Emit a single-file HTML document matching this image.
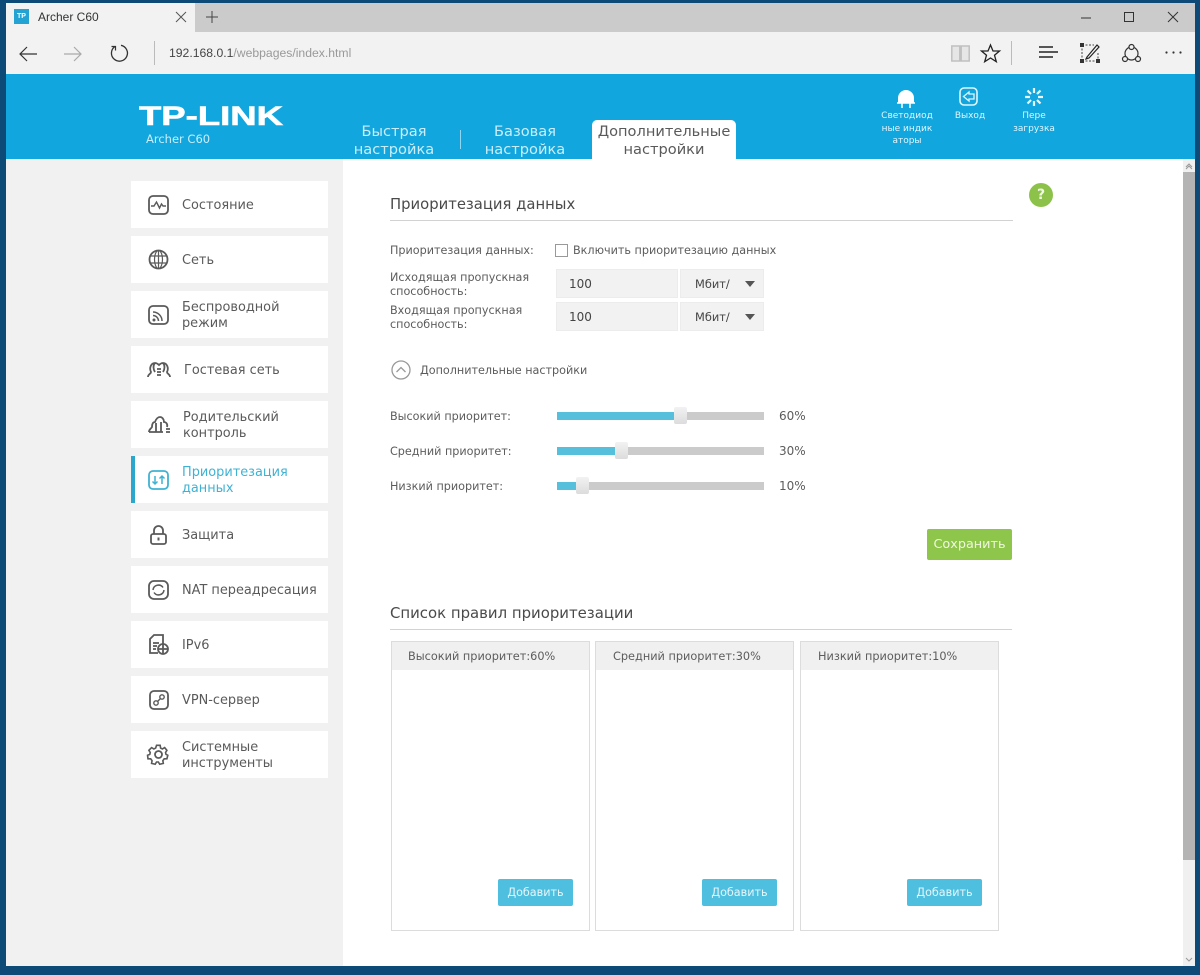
<!DOCTYPE html>
<html lang="ru">
<head>
<meta charset="utf-8">
<title>Archer C60</title>
<style>
html,body{margin:0;padding:0}
body{width:1200px;height:975px;overflow:hidden;position:relative;background:#0d4a78;font-family:"DejaVu Sans","Liberation Sans",sans-serif;color:#555}
.a{position:absolute}
.t{position:absolute;white-space:nowrap;font-size:11.2px;line-height:14px;color:#5c5c5c}
.n{font-size:12px}
.b{position:absolute;background:#fff;left:131px;width:197px;height:47px}
.m{position:absolute;left:182px;white-space:nowrap;font-size:12.9px;line-height:16px;color:#5a5a5a;margin-top:1px}
svg{position:absolute;overflow:visible}
.ic{fill:none;stroke:#5a5a5a;stroke-width:1.8}
.sl{position:absolute;left:557px;width:207px;height:8px;background:#cbcbcb}
.fl{position:absolute;left:557px;height:8px;background:#56bfdc}
.th{position:absolute;width:13px;height:17px;background:linear-gradient(#f2f2f2,#dcdcdc);border-radius:2px}
.inp{position:absolute;background:#f2f2f2;height:29px;border:1px solid #ececec;box-sizing:border-box}
.col{position:absolute;top:641px;width:199px;height:290px;border:1px solid #dcdcdc;box-sizing:border-box;background:#fff}
.col div.h{height:28px;background:#f0f0f0;font-size:11.3px;line-height:29px;color:#5c5c5c;padding-left:16px;white-space:nowrap}
.add{position:absolute;width:75px;height:27px;top:879px;background:#4fbfdf;border-radius:2px;color:#e4f6fb;font-size:11.2px;line-height:27px;text-align:center}
.hd{position:absolute;color:#e0f5fc;font-size:9px;line-height:12.5px;text-align:center;font-weight:400;white-space:nowrap}
.nav{position:absolute;text-align:center;font-size:14.6px;line-height:18px;color:#c8eefa;white-space:nowrap}
</style>
</head>
<body>
<!-- window -->
<div class="a" style="left:6px;top:3px;width:1189px;height:29px;background:#cbcbcb"></div>
<div class="a" style="left:6px;top:3px;width:189px;height:29px;background:#f2f2f2"></div>
<div class="a" style="left:6px;top:32px;width:1189px;height:42px;background:#f2f2f2"></div>
<div class="a" style="left:6px;top:74px;width:1189px;height:85px;background:#12a6de"></div>
<div class="a" style="left:6px;top:159px;width:337px;height:807px;background:#f1f1f1"></div>
<div class="a" style="left:343px;top:159px;width:840px;height:807px;background:#fff"></div>
<div class="a" style="left:1183px;top:159px;width:12px;height:807px;background:#f0f0f0"></div>
<div class="a" style="left:1183px;top:172px;width:12px;height:688px;background:#b4b4b4"></div>
<svg style="left:1183px;top:159px" width="12" height="12"><path d="M3 8l3-3 3 3M3 10l3-3 3 3" fill="none" stroke="#999" stroke-width="1"/></svg>
<svg style="left:1183px;top:954px" width="12" height="12"><path d="M3 4l3 3 3-3" fill="none" stroke="#999" stroke-width="1"/></svg>

<!-- tab -->
<div class="a" style="left:14px;top:9px;width:15px;height:15px;background:#23a3d3;color:#fff;font:bold 7px/15px 'Liberation Sans',sans-serif;text-align:center">TP</div>
<div class="t" style="left:38px;top:10px;font-family:'Liberation Sans',sans-serif;font-size:12px;color:#333">Archer C60</div>
<svg style="left:176px;top:12px" width="10" height="10"><path d="M0 0l10 10M10 0L0 10" stroke="#555" stroke-width="1" fill="none"/></svg>
<svg style="left:206px;top:11px" width="12" height="12"><path d="M6 0v12M0 6h12" stroke="#444" stroke-width="1" fill="none"/></svg>
<!-- window ctl -->
<svg style="left:1081px;top:17px" width="10" height="2"><path d="M0 1h10" stroke="#333" stroke-width="1"/></svg>
<svg style="left:1124px;top:12px" width="10" height="10"><rect x=".5" y=".5" width="9" height="9" fill="none" stroke="#333"/></svg>
<svg style="left:1168px;top:12px" width="10" height="10"><path d="M0 0l10 10M10 0L0 10" stroke="#333" stroke-width="1" fill="none"/></svg>
<!-- toolbar -->
<svg style="left:19px;top:45px" width="18" height="18"><path d="M18 9H1M8 2L1 9l7 7" fill="none" stroke="#333" stroke-width="1.2"/></svg>
<svg style="left:64px;top:45px" width="18" height="18"><path d="M0 9h17M10 2l7 7-7 7" fill="none" stroke="#aaa" stroke-width="1.2"/></svg>
<svg style="left:110px;top:44px" width="18" height="18"><path d="M5 2.500A8 8 0 1 0 11 1.300" fill="none" stroke="#333" stroke-width="1.300"/><path d="M1.500 2.500H5.500V6.500" fill="none" stroke="#333" stroke-width="1.200"/></svg>
<div class="a" style="left:154px;top:41px;width:1px;height:24px;background:#bbb"></div>
<div class="t" style="left:169px;top:46px;font-family:'Liberation Sans',sans-serif;font-size:12.2px;color:#444">192.168.0.1<span style="color:#999">/webpages/index.html</span></div>
<svg style="left:951px;top:45px" width="19" height="17"><path d="M.8 1h8v15h-8zM10.200 1h8v15h-8z" fill="#e6e6e6" stroke="#c0c0c0" stroke-width="1.500"/></svg>
<svg style="left:981px;top:44px" width="19" height="19"><path d="M9.500 1l2.500 6h6.500l-5 4.200 1.800 6.500-5.800-3.700-5.800 3.700 1.800-6.500-5-4.200H7z" fill="none" stroke="#222" stroke-width="1.3"/></svg>
<div class="a" style="left:1011px;top:41px;width:1px;height:24px;background:#bbb"></div>
<svg style="left:1039px;top:46px" width="19" height="13"><path d="M0 1h14M0 6h19M0 11h14" stroke="#222" stroke-width="1.4" fill="none"/></svg>
<svg style="left:1080px;top:43px" width="20" height="20"><path d="M2 2h12M2 18h16M2 2v16M18 10v8" stroke="#444" stroke-dasharray="2 1.500" fill="none"/><path d="M7 14L17 2l2 2L9 15l-3 1z" fill="none" stroke="#222" stroke-width="1.200"/><rect x="0" y="0" width="4" height="4" fill="#333"/><rect x="0" y="16" width="4" height="4" fill="#333"/><rect x="16" y="16" width="4" height="4" fill="#333"/></svg>
<svg style="left:1122px;top:44px" width="19" height="19"><circle cx="9.500" cy="9.500" r="6.500" fill="none" stroke="#333" stroke-width="1.200"/><circle cx="9.500" cy="3" r="2.500" fill="#f2f2f2" stroke="#333" stroke-width="1.200"/><circle cx="3" cy="15" r="2.500" fill="#f2f2f2" stroke="#333" stroke-width="1.200"/><circle cx="16" cy="15" r="2.500" fill="#f2f2f2" stroke="#333" stroke-width="1.200"/></svg>
<svg style="left:1165px;top:51px" width="17" height="3"><circle cx="1.500" cy="1.500" r="1.100" fill="#333"/><circle cx="8.500" cy="1.500" r="1.100" fill="#333"/><circle cx="15.500" cy="1.500" r="1.100" fill="#333"/></svg>

<!-- header -->
<svg style="left:139px;top:104px" width="146" height="24"><text x="0" y="21" font-family="Liberation Sans" font-weight="700" font-size="27" fill="#fff" stroke="#fff" stroke-width=".6" textLength="144" lengthAdjust="spacingAndGlyphs">TP-LINK</text></svg>
<div class="t" style="left:146px;top:132px;color:#c8eefa;font-size:11.500px">Archer C60</div>
<div class="nav" style="left:344px;top:123px;width:100px">Быстрая<br>настройка</div>
<div class="a" style="left:460px;top:130px;width:1px;height:19px;background:#8fd6f0"></div>
<div class="nav" style="left:475px;top:123px;width:100px">Базовая<br>настройка</div>
<div class="a" style="left:592px;top:120px;width:144px;height:39px;background:#fff;border-radius:5px 5px 0 0"></div>
<div class="nav" style="left:592px;top:123px;width:144px;color:#5a5a5a">Дополнительные<br>настройки</div>

<svg style="left:897px;top:89px" width="20" height="20"><path d="M1 14V9a8 8 0 0 1 16 0v5z" fill="#fff"/><path d="M0 14h18M5 14v5M13 14v5" stroke="#fff" stroke-width="1.500"/></svg>
<div class="hd" style="left:872px;top:110px;width:70px">Светодиод<br>ные индик<br>аторы</div>
<svg style="left:959px;top:87px" width="20" height="20"><rect x="1" y="1" width="17" height="17" rx="4" fill="none" stroke="#e0f6fd" stroke-width="1.600"/><path d="M15 7H10V5L4.500 9.500 10 14v-2h5z" fill="none" stroke="#e0f6fd" stroke-width="1.300"/></svg>
<div class="hd" style="left:935px;top:110px;width:70px">Выход</div>
<svg style="left:1024px;top:87px" width="20" height="20"><g stroke="#e6f8fd" stroke-width="2.200"><path d="M10 1v5M10 14v5M1 10h5M14 10h5M3.500 3.500l3.500 3.500M13 13l3.500 3.500M3.500 16.500L7 13M13 7l3.500-3.500"/></g></svg>
<div class="hd" style="left:999px;top:110px;width:70px">Пере<br>загрузка</div>

<!-- sidebar -->
<div class="b" style="top:181px"></div><div class="b" style="top:236px"></div><div class="b" style="top:291px"></div><div class="b" style="top:346px"></div><div class="b" style="top:401px"></div><div class="b" style="top:456px"></div><div class="b" style="top:511px"></div><div class="b" style="top:566px"></div><div class="b" style="top:621px"></div><div class="b" style="top:676px"></div><div class="b" style="top:731px"></div>
<div class="a" style="left:131px;top:456px;width:4px;height:47px;background:#2ba6cd"></div>

<div class="m" style="top:197px">Состояние</div>
<div class="m" style="top:252px">Сеть</div>
<div class="m" style="top:299px">Беспроводной<br>режим</div>
<div class="m" style="top:362px;left:184px">Гостевая сеть</div>
<div class="m" style="top:409px;left:183px">Родительский<br>контроль</div>
<div class="m" style="top:464px;color:#3fb2d3">Приоритезация<br>данных</div>
<div class="m" style="top:527px">Защита</div>
<div class="m" style="top:582px">NAT переадресация</div>
<div class="m" style="top:637px">IPv6</div>
<div class="m" style="top:692px">VPN-сервер</div>
<div class="m" style="top:739px">Системные<br>инструменты</div>

<svg class="ic" style="left:148px;top:195px" width="21" height="20"><rect x="1" y="1" width="19" height="18" rx="4"/><path d="M3 11h3l2.500-4 3 6 2-4 1.500 2h3" stroke-width="1.400"/></svg>
<svg class="ic" style="left:148px;top:249px" width="21" height="21"><circle cx="10.500" cy="10.500" r="9"/><ellipse cx="10.500" cy="10.500" rx="4" ry="9" stroke-width="1.200"/><path d="M2 7h17M2 14h17M10.500 1.500v18" stroke-width="1.200"/></svg>
<svg class="ic" style="left:148px;top:305px" width="21" height="20"><rect x="1" y="1" width="19" height="18" rx="4"/><path d="M5 7a9 9 0 0 1 9 9M5 10.500a5.500 5.500 0 0 1 5.500 5.500" stroke-width="1.500"/><circle cx="6" cy="15" r="1.500" fill="#5a5a5a" stroke="none"/></svg>
<svg class="ic" style="left:147px;top:361px" width="24" height="17" stroke-width="1.400"><path d="M1 16c0-3 3-3 3-5-2-4 0-9 4-9 2 0 3 1 4 2 1-1 2-2 4-2 4 0 6 5 4 9 0 2 3 2 3 5"/><path d="M8 2c-2 2-2 6 0 9M16 2c2 2 2 6 0 9"/><path d="M10 8h4M10 11h4M10 14h4"/></svg>
<svg class="ic" style="left:148px;top:416px" width="23" height="18" stroke-width="1.400"><path d="M1 16c0-3 2-3 3-5 0-3 1-5 3-5 1-3 3-5 5-5s4 2 4 5c2 0 4 2 3 5"/><path d="M1 16h14M8 7v9M13 6v10"/><path d="M18 13h4M18 16h4"/></svg>
<svg class="ic" style="left:148px;top:470px;stroke:#3fb2d3" width="21" height="20"><rect x="1" y="1" width="19" height="18" rx="4"/><path d="M7 6v8M4.500 11.500L7 14l2.500-2.500M14 14V6M11.500 8.500L14 6l2.500 2.500" stroke-width="1.500"/></svg>
<svg class="ic" style="left:150px;top:525px" width="17" height="20"><path d="M4 9V5.500a4.500 4.500 0 0 1 9 0V9"/><rect x="1" y="9" width="15" height="10" rx="2"/><path d="M8.500 12.500v3" stroke-width="2"/></svg>
<svg class="ic" style="left:148px;top:580px" width="21" height="20"><rect x="1" y="1" width="19" height="18" rx="5"/><path d="M5 10a5.500 5.500 0 0 1 10-2.500M16 10a5.500 5.500 0 0 1-10 2.500" stroke-width="1.500"/></svg>
<svg class="ic" style="left:149px;top:634px" width="20" height="21" stroke-width="1.400"><path d="M9 19H1V5l4-4h9v9"/><path d="M4 9h6M4 12h4M4 15h3"/><circle cx="14" cy="15" r="5"/><path d="M9.500 15h9M14 10v10"/></svg>
<svg class="ic" style="left:149px;top:690px" width="20" height="20"><rect x="1" y="1" width="18" height="18" rx="4"/><circle cx="7" cy="13" r="2.200" stroke-width="1.400"/><circle cx="13" cy="7" r="2.200" stroke-width="1.400"/><path d="M8.500 11.500l3-3" stroke-width="1.400"/></svg>
<svg class="ic" style="left:148px;top:744px" width="21" height="21"><path d="M8.500 1h4l.5 3 2 1 2.500-1.500 2.500 3-1.500 2.500.5 2 2 1-1 4-3 0-1.500 2 .5 3-4 1-1.500-2.500h-2L7 22l-4-1 .5-3-1.500-2-3 0-.5-4 2.500-1 .5-2L0 6.500l3-3L5.500 5l2-1z" transform="scale(.9) translate(1 .5)"/><circle cx="10.500" cy="10.500" r="3.500"/></svg>

<!-- help -->
<div class="a" style="left:1029px;top:183px;width:24px;height:24px;border-radius:50%;background:#8cc24a;color:#f0f8e4;font:bold 14px/24px 'DejaVu Sans',sans-serif;text-align:center">?</div>

<!-- section 1 -->
<div class="t" style="left:390px;top:196px;font-size:14.800px;line-height:17px;color:#4a4a4a">Приоритезация данных</div>
<div class="a" style="left:390px;top:220px;width:623px;height:1px;background:#d2d2d2"></div>
<div class="t" style="left:390px;top:244px">Приоритезация данных:</div>
<div class="a" style="left:555px;top:244px;width:13px;height:13px;border:1px solid #999;box-sizing:border-box;background:#fff"></div>
<div class="t" style="left:573px;top:244px">Включить приоритезацию данных</div>
<div class="t" style="left:390px;top:271px">Исходящая пропускная<br>способность:</div>
<div class="t" style="left:390px;top:304px">Входящая пропускная<br>способность:</div>
<div class="inp" style="left:556px;top:269px;width:122px"></div>
<div class="inp" style="left:680px;top:269px;width:84px"></div>
<div class="inp" style="left:556px;top:302px;width:122px"></div>
<div class="inp" style="left:680px;top:302px;width:84px"></div>
<div class="t n" style="left:569px;top:277px;color:#444">100</div>
<div class="t n" style="left:569px;top:310px;color:#444">100</div>
<div class="t" style="left:695px;top:277px;color:#444;font-size:11.400px">Мбит/</div>
<div class="t" style="left:695px;top:310px;color:#444;font-size:11.400px">Мбит/</div>
<svg style="left:745px;top:281px" width="10" height="6"><path d="M0 0h10L5 6z" fill="#555"/></svg>
<svg style="left:745px;top:314px" width="10" height="6"><path d="M0 0h10L5 6z" fill="#555"/></svg>

<svg style="left:391px;top:360px" width="20" height="20"><circle cx="10" cy="10" r="9" fill="none" stroke="#999" stroke-width="1.300"/><path d="M5.500 12L10 7.500 14.500 12" fill="none" stroke="#999" stroke-width="1.300"/></svg>
<div class="t" style="left:420px;top:364px">Дополнительные настройки</div>

<div class="t" style="left:390px;top:410px">Высокий приоритет:</div>
<div class="t" style="left:390px;top:445px">Средний приоритет:</div>
<div class="t" style="left:390px;top:480px">Низкий приоритет:</div>
<div class="sl" style="top:412px"></div><div class="fl" style="top:412px;width:118px"></div><div class="th" style="left:674px;top:407px"></div>
<div class="sl" style="top:447px"></div><div class="fl" style="top:447px;width:60px"></div><div class="th" style="left:615px;top:442px"></div>
<div class="sl" style="top:482px"></div><div class="fl" style="top:482px;width:20px"></div><div class="th" style="left:576px;top:477px"></div>
<div class="t n" style="left:779px;top:409px">60%</div>
<div class="t n" style="left:779px;top:444px">30%</div>
<div class="t n" style="left:779px;top:479px">10%</div>

<div class="a" style="left:927px;top:529px;width:85px;height:31px;background:#8ec64b;border-radius:2px;color:#eef8dc;font-size:12.800px;line-height:31px;text-align:center">Сохранить</div>

<!-- section 2 -->
<div class="t" style="left:390px;top:605px;font-size:14.900px;line-height:17px;color:#4a4a4a">Список правил приоритезации</div>
<div class="a" style="left:390px;top:629px;width:622px;height:1px;background:#d2d2d2"></div>
<div class="col" style="left:391px"><div class="h">Высокий приоритет:60%</div></div>
<div class="col" style="left:595px"><div class="h" style="padding-left:17px">Средний приоритет:30%</div></div>
<div class="col" style="left:800px"><div class="h" style="padding-left:17px">Низкий приоритет:10%</div></div>
<div class="add" style="left:498px">Добавить</div>
<div class="add" style="left:702px">Добавить</div>
<div class="add" style="left:907px">Добавить</div>
</body>
</html>
